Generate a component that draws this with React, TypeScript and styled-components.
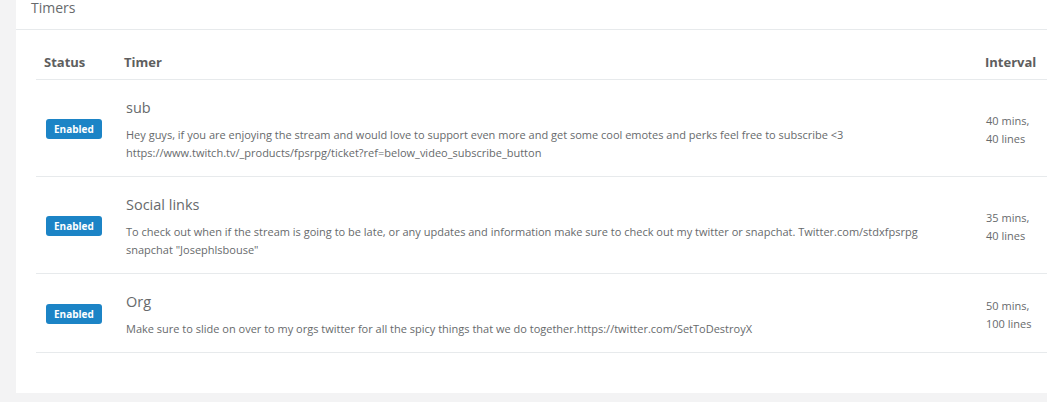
import { createGlobalStyle } from "styled-components";
import styled from "styled-components";

const GlobalStyle = createGlobalStyle`
  html, body {
    margin: 0;
    padding: 0;
    background: #f3f3f4;
    overflow: hidden;
  }
  body {
    font-family: "Open Sans", "Liberation Sans", sans-serif;
    color: #676a6c;
  }
`;

const Page = styled.div`
  height: 402px;
  background: #f3f3f4;
`;

const Panel = styled.section`
  margin-left: 16px;
  padding-bottom: 40px;
  background: #ffffff;
`;

const PanelTitle = styled.h5`
  box-sizing: border-box;
  height: 30px;
  margin: 0;
  padding: 0 15px;
  border-bottom: 1px solid #e7eaec;
  color: #676a6c;
  font-size: 14px;
  font-weight: 400;
  line-height: 16px;
`;

const PanelBody = styled.div`
  padding: 15px 0 0 20px;
`;

const Table = styled.table`
  width: 100%;
  table-layout: fixed;
  border-collapse: collapse;
  font-size: 11px;
`;

const HeadCell = styled.th<{ $width?: number }>`
  box-sizing: border-box;
  width: ${(p) => (p.$width ? `${p.$width}px` : "auto")};
  padding: 8px;
  border-bottom: 1px solid #e7eaec;
  color: #5e5e5e;
  font-size: 13px;
  font-weight: 700;
  line-height: 18px;
  text-align: left;
`;

const Row = styled.tr`
  border-bottom: 1px solid #e7eaec;
`;

const StatusCell = styled.td`
  padding: 2px 10px 0;
  vertical-align: middle;
`;

const TimerCell = styled.td`
  padding: 17px 10px 14px;
  vertical-align: top;
`;

const IntervalCell = styled.td`
  padding: 3px 9px 0;
  line-height: 18px;
  vertical-align: middle;
`;

const Badge = styled.span`
  display: block;
  width: fit-content;
  padding: 0 8px;
  border-radius: 3px;
  background: #1c84c6;
  color: #ffffff;
  font-size: 10px;
  font-weight: 700;
  line-height: 20px;
`;

const TimerName = styled.h3`
  margin: 0 0 7px;
  color: #676a6c;
  font-size: 14.5px;
  font-weight: 500;
  line-height: 22px;
`;

const TimerMessage = styled.p`
  margin: 0;
  font-size: 11px;
  line-height: 18px;
`;

interface Timer {
  name: string;
  message: string;
  minutes: number;
  lines: number;
}

const timers: Timer[] = [
  {
    name: "sub",
    message:
      "Hey guys, if you are enjoying the stream and would love to support even more and get some cool emotes and perks feel free to subscribe <3 https://www.twitch.tv/_products/fpsrpg/ticket?ref=below_video_subscribe_button",
    minutes: 40,
    lines: 40,
  },
  {
    name: "Social links",
    message:
      'To check out when if the stream is going to be late, or any updates and information make sure to check out my twitter or snapchat. Twitter.com/stdxfpsrpg snapchat "Josephlsbouse"',
    minutes: 35,
    lines: 40,
  },
  {
    name: "Org",
    message:
      "Make sure to slide on over to my orgs twitter for all the spicy things that we do together.https://twitter.com/SetToDestroyX",
    minutes: 50,
    lines: 100,
  },
];

export default function App() {
  return (
    <Page>
      <GlobalStyle />
      <Panel>
        <PanelTitle>Timers</PanelTitle>
        <PanelBody>
          <Table>
            <thead>
              <tr>
                <HeadCell $width={80}>Status</HeadCell>
                <HeadCell>Timer</HeadCell>
                <HeadCell $width={70}>Interval</HeadCell>
              </tr>
            </thead>
            <tbody>
              {timers.map((timer) => (
                <Row key={timer.name}>
                  <StatusCell>
                    <Badge>Enabled</Badge>
                  </StatusCell>
                  <TimerCell>
                    <TimerName>{timer.name}</TimerName>
                    <TimerMessage>{timer.message}</TimerMessage>
                  </TimerCell>
                  <IntervalCell>
                    {timer.minutes} mins,
                    <br />
                    {timer.lines} lines
                  </IntervalCell>
                </Row>
              ))}
            </tbody>
          </Table>
        </PanelBody>
      </Panel>
    </Page>
  );
}
